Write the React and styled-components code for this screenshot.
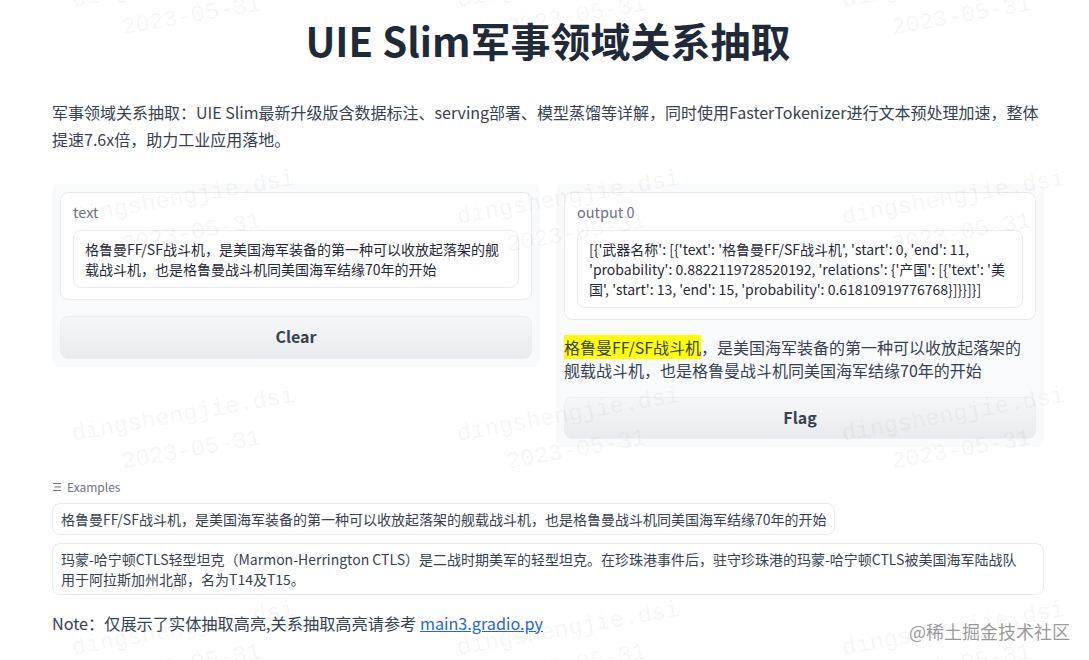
import React from "react"
import styled, { createGlobalStyle } from "styled-components"

const sans = `"Noto Sans CJK SC", "Noto Sans", sans-serif`

const GlobalStyle = createGlobalStyle`
  html, body {
    margin: 0;
    background: #fff;
    overflow: hidden;
  }
  body {
    font-family: ${sans};
    color: #374151;
  }
`

const marks = [
  [70, -12], [455, -12], [840, -12],
  [70, 205], [455, 205], [840, 205],
  [70, 422], [455, 422], [840, 422],
  [70, 636], [455, 636], [840, 636],
]

function App() {
  return (
    <Page>
      <GlobalStyle />
      <Title>UIE Slim军事领域关系抽取</Title>
      <Intro>
        军事领域关系抽取：UIE Slim最新升级版含数据标注、serving部署、模型蒸馏等详解，同时使用FasterTokenizer进行文本预处理加速，整体提速7.6x倍，助力工业应用落地。
      </Intro>
      <Columns>
        <Panel>
          <Card>
            <Label>text</Label>
            <TextBox>
              格鲁曼FF/SF战斗机，是美国海军装备的第一种可以收放起落架的舰载战斗机，也是格鲁曼战斗机同美国海军结缘70年的开始
            </TextBox>
          </Card>
          <ActionButton>Clear</ActionButton>
        </Panel>
        <Panel>
          <Card>
            <Label>output 0</Label>
            <TextBox>
              [{"{"}'武器名称': [{"{"}'text': '格鲁曼FF/SF战斗机', 'start': 0, 'end': 11, 'probability': 0.8822119728520192, 'relations': {"{"}'产国': [{"{"}'text': '美国', 'start': 13, 'end': 15, 'probability': 0.61810919776768{"}"}]{"}"}{"}"}]{"}"}]
            </TextBox>
          </Card>
          <Highlighted>
            <mark>格鲁曼FF/SF战斗机</mark>，是美国海军装备的第一种可以收放起落架的舰载战斗机，也是格鲁曼战斗机同美国海军结缘70年的开始
          </Highlighted>
          <FlagButton>Flag</FlagButton>
        </Panel>
      </Columns>
      <ExamplesLabel>
        <svg width="10" height="10" viewBox="0 0 10 10" fill="none" stroke="#6b7280" strokeWidth="1">
          <path d="M1 1.5h8M2.5 5h6.5M1 8.5h8" />
        </svg>
        Examples
      </ExamplesLabel>
      <Examples>
        <Example>格鲁曼FF/SF战斗机，是美国海军装备的第一种可以收放起落架的舰载战斗机，也是格鲁曼战斗机同美国海军结缘70年的开始</Example>
        <Example>
          玛蒙-哈宁顿CTLS轻型坦克（Marmon-Herrington CTLS）是二战时期美军的轻型坦克。在珍珠港事件后，驻守珍珠港的玛蒙-哈宁顿CTLS被美国海军陆战队用于阿拉斯加州北部，名为T14及T15。
        </Example>
      </Examples>
      <Note>
        Note：仅展示了实体抽取高亮,关系抽取高亮请参考 <a href="#main3">main3.gradio.py</a>
      </Note>
      {marks.map(([x, y]) => (
        <Watermark key={`${x}-${y}`} style={{ left: x, top: y }}>
          <span>dingshengjie.dsi</span>
          <span>2023-05-31</span>
        </Watermark>
      ))}
      <SiteMark>@稀土掘金技术社区</SiteMark>
    </Page>
  )
}

export default App

const Page = styled.div`
  position: relative;
  width: 1089px;
  height: 660px;
  box-sizing: border-box;
  padding: 12px 45px 0 52px;
  overflow: hidden;
`

const Title = styled.h1`
  margin: 0;
  font-size: 40px;
  line-height: 56px;
  font-weight: 700;
  text-align: center;
  color: #1f2937;
`

const Intro = styled.p`
  margin: 31px 0 0;
  font-size: 16px;
  line-height: 27px;
  color: #374151;
`

const Columns = styled.div`
  display: grid;
  grid-template-columns: 488px 488px;
  gap: 16px;
  align-items: start;
  margin-top: 31px;
`

const Panel = styled.section`
  display: flex;
  flex-direction: column;
  padding: 8px;
  background: #f9fafb;
  border-radius: 8px;
`

const Card = styled.div`
  padding: 9px 12px 11px;
  background: #fff;
  border: 1px solid #e9ebee;
  border-radius: 8px;
`

const Label = styled.div`
  font-size: 14.5px;
  line-height: 20px;
  color: #6b7280;
  margin-bottom: 8px;
`

const TextBox = styled.div`
  padding: 8px 11px;
  font-size: 14px;
  line-height: 20px;
  color: #1f2937;
  background: #fff;
  border: 1px solid #e9ebee;
  border-radius: 8px;
`

const ActionButton = styled.button`
  height: 43px;
  margin-top: 16px;
  padding: 0 0 3px;
  font-family: ${sans};
  font-size: 16px;
  font-weight: 700;
  color: #374151;
  background: linear-gradient(to bottom, #f6f7f8, #e8eaed);
  border: 1px solid #eceef0;
  border-radius: 8px;
`

const FlagButton = styled(ActionButton)`
  height: 42px;
  margin-top: 15px;
  padding-bottom: 2px;
`

const Highlighted = styled.div`
  margin-top: 16px;
  font-size: 16px;
  line-height: 23px;
  color: #374151;

  mark {
    background: #ffff00;
    color: inherit;
  }
`

const ExamplesLabel = styled.div`
  display: flex;
  align-items: center;
  gap: 5px;
  margin-top: 31px;
  font-size: 12px;
  line-height: 18px;
  color: #6b7280;
`

const Examples = styled.div`
  display: flex;
  flex-direction: column;
  align-items: flex-start;
  gap: 8px;
  margin-top: 7px;
`

const Example = styled.div`
  padding: 5px 16px 5px 8px;
  font-size: 14px;
  line-height: 20px;
  color: #374151;
  background: #fff;
  border: 1px solid #e9ebee;
  border-radius: 8px;

  &:first-child {
    padding-right: 8px;
  }
`

const Note = styled.p`
  margin: 16px 0 0;
  font-size: 16.2px;
  line-height: 24px;
  color: #374151;

  a {
    color: #2563eb;
  }
`

const Watermark = styled.div`
  position: absolute;
  display: flex;
  flex-direction: column;
  gap: 10px;
  font-family: "Liberation Mono", monospace;
  font-size: 23.5px;
  line-height: 26px;
  color: rgba(120, 120, 120, 0.07);
  white-space: nowrap;
  transform: rotate(-10deg);
  transform-origin: left top;
  pointer-events: none;

  span:last-child {
    margin-left: 44px;
  }
`

const SiteMark = styled.div`
  position: absolute;
  right: 19px;
  top: 618px;
  font-size: 18px;
  line-height: 26px;
  color: rgba(120, 120, 120, 0.75);
`
